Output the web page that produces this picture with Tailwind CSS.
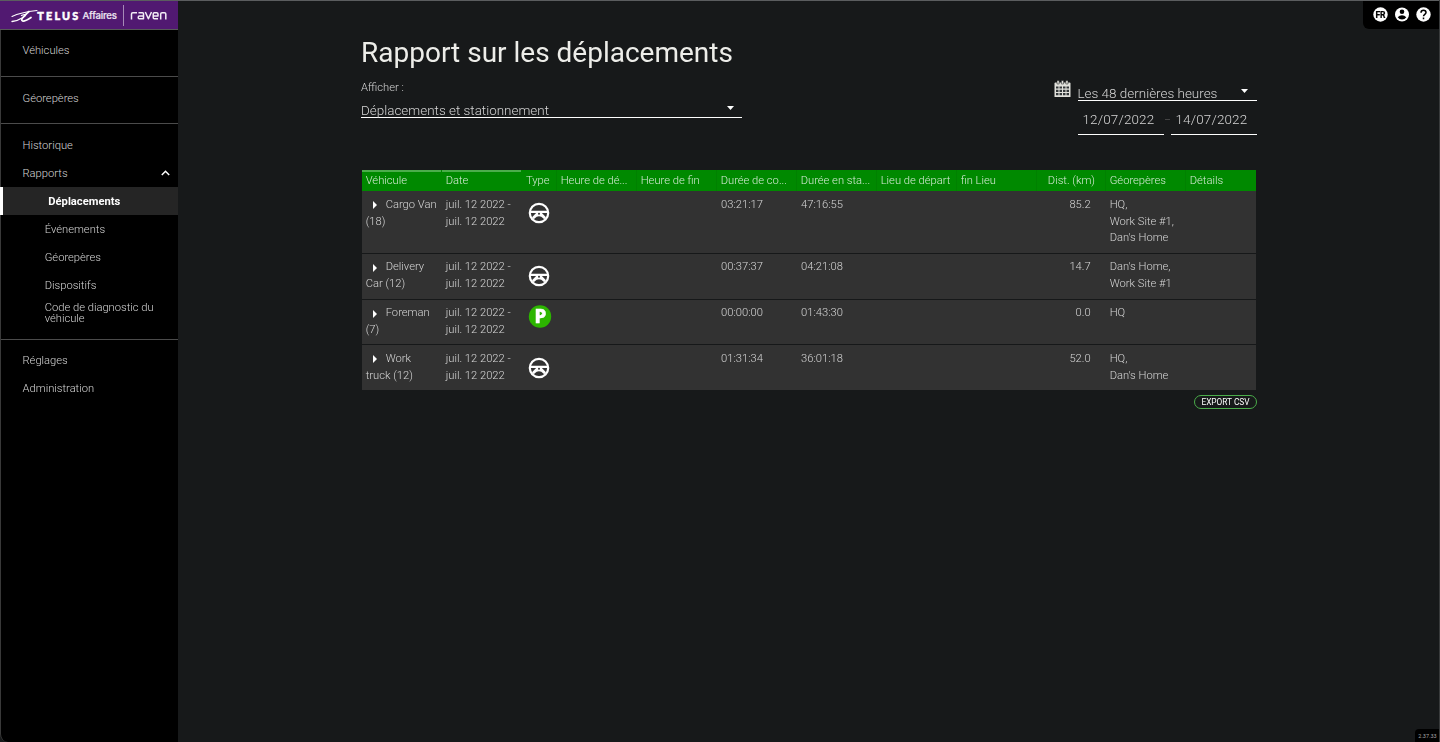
<!DOCTYPE html>
<html lang="fr">
<head>
<meta charset="utf-8">
<title>Rapport sur les déplacements</title>
<script src="https://cdn.jsdelivr.net/npm/@tailwindcss/browser@4"></script>
</head>
<body class="bg-[#17191a] font-['Roboto',sans-serif] font-light text-[#d6d6d6]">
<svg class="hidden">
  <symbol id="wheel" viewBox="0 0 22 22">
    <circle cx="11" cy="11" r="9.200" fill="none" stroke="#fff" stroke-width="2.200"/>
    <path d="M2 8.800H20V10.900H13.900L18 15.200L16.300 17.200L13.300 14.700Q11 13.600 8.700 14.700L5.700 17.200L4 15.200L8.100 10.900H2Z" fill="#fff"/>
    <path d="M7.500 17.300Q11 15.300 14.500 17.300Q11 19.500 7.500 17.300Z" fill="#333"/>
    <circle cx="11" cy="11.800" r="1" fill="#333"/>
  </symbol>
</svg>
<div class="relative flex h-[742px] w-[1440px] overflow-hidden opacity-[.999]">
  <aside class="h-full w-[178px] shrink-0 rounded-bl-lg border-l border-[#3a3a3a] bg-black text-[11.2px] leading-[14px]">
    <div class="-ml-px flex h-[30px] items-center border-b border-[#5a5a5a] bg-[#521a72]">
      <svg width="178" height="30" viewBox="0 0 178 30" fill="none">
        <g stroke="#fff" stroke-linecap="round">
          <path d="M12 16.500C19 13 28 11.500 37 10.500" stroke-width="1.100"/>
          <path d="M29 11.500C24 16 20 20 22.500 21C25 21.600 28 19.500 31 17.500" stroke-width="1.700"/>
          <path d="M21.500 15.500C26 13.500 27 15 23 17.500C19 20 15 21.300 12 21.500" stroke-width="1.300"/>
        </g>
        <text x="37.300" y="19.500" font-family="Lato" font-weight="900" font-size="10.800" textLength="41" fill="#fff" stroke="#fff" stroke-width=".5">TELUS</text>
        <text x="78.500" y="14" font-family="Inter" font-size="2.500" fill="#fff">™</text>
        <text x="82.500" y="19.300" font-family="Inter" font-weight="500" font-size="9.600" textLength="34.500" fill="#eee6f3" stroke="#eee6f3" stroke-width=".2">Affaires</text>
        <path d="M123.500 5V26" stroke="#a78bb8"/>
        <g stroke="#f3edf6" stroke-width="1.500" stroke-linejoin="round">
          <path d="M131.500 19.500V14Q131.500 12.700 132.800 12.700H137"/>
          <path d="M138.500 12.700H142.500Q143.500 12.700 143.500 13.800V18.700H139.200Q138.200 18.700 138.200 17.400Q138.200 16 139.500 16H143.500"/>
          <path d="M145.300 12L148.400 18.700L151.500 12"/>
          <path d="M153.200 16H158V14Q158 12.700 156.700 12.700H154.400Q153.200 12.700 153.200 14V17.400Q153.200 18.700 154.400 18.700H158"/>
          <path d="M160.700 19.500V14Q160.700 12.700 162 12.700H164.500Q165.800 12.700 165.800 14V19.500"/>
        </g>
      </svg>
    </div>
    <nav>
      <div class="h-[47px] border-b border-[#4c4c4c] pt-[14px] pl-[21.500px]">Véhicules</div>
      <div class="h-[47px] border-b border-[#4c4c4c] pt-[15px] pl-[21.500px]">Géorepères</div>
      <div class="h-[216px] border-b border-[#4c4c4c] pt-[7px]">
        <div class="flex h-[28px] items-center pt-[2px] pl-[21.500px]">Historique</div>
        <div class="flex h-[28px] items-center justify-between pt-[2px] pr-[8px] pl-[21.500px]">Rapports
          <svg class="mb-[2px]" width="9" height="6" viewBox="0 0 9 6" fill="none" stroke="#fff" stroke-width="1.500"><path d="M.8 5L4.500 1.300L8.200 5"/></svg>
        </div>
        <div class="-ml-px flex h-[28px] items-center border-l-[3px] border-white bg-[#262626] pt-[2px] pl-[45.300px] font-bold text-white">Déplacements</div>
        <div class="flex h-[28px] items-center pt-[2px] pl-[43.700px]">Événements</div>
        <div class="flex h-[28px] items-center pt-[2px] pl-[43.700px]">Géorepères</div>
        <div class="flex h-[28px] items-center pt-[2px] pl-[43.700px]">Dispositifs</div>
        <div class="flex h-[28px] items-center pl-[43.700px] leading-[11px]"><span>Code de diagnostic du<br>véhicule</span></div>
      </div>
      <div class="pt-[6px]">
        <div class="flex h-[28px] items-center pt-[2px] pl-[21.500px]">Réglages</div>
        <div class="flex h-[28px] items-center pt-[2px] pl-[21.500px]">Administration</div>
      </div>
    </nav>
  </aside>

  <main class="ml-[183px] w-[896px] pt-[34px]">
    <h1 class="h-[38px] text-[28px] leading-[38px] font-normal whitespace-nowrap text-[#eeeeea]">Rapport sur les déplacements</h1>
    <div class="flex h-[98px] justify-between">
      <div class="w-[381px] pt-[9px]">
        <div class="text-[11.200px] leading-[14px]">Afficher :</div>
        <div class="mt-[7px] flex h-[16px] items-end justify-between border-b border-white pr-[8px] text-[13.440px] leading-[14px]">
          <span class="-mb-px">Déplacements et stationnement</span>
          <svg class="mb-[7px]" width="7" height="4" viewBox="0 0 7 4" fill="#fff"><path d="M0 0H7L3.500 4Z"/></svg>
        </div>
      </div>
      <div class="flex gap-[7px]">
        <svg class="mt-[8px]" width="17" height="18" viewBox="0 0 17 18">
          <path d="M.5 3.500Q.5 2.500 1.500 2.500H15.500Q16.500 2.500 16.500 3.500V17H.5Z" fill="#e2e2dc"/>
          <path d="M3 .5H5.200V4H3ZM11.800 .5H14V4H11.800ZM7.400 .5H9.600V4H7.400Z" fill="#e2e2dc" stroke="#17191a" stroke-width=".5"/>
          <path d="M2 6.500H4.500V8.500H2ZM5.500 6.500H8V8.500H5.500ZM9 6.500H11.500V8.500H9ZM12.500 6.500H15V8.500H12.500ZM2 9.700H4.500V11.900H2ZM5.500 9.700H8V11.900H5.500ZM9 9.700H11.500V11.900H9ZM12.500 9.700H15V11.900H12.500ZM2 13.100H4.500V15.300H2ZM5.500 13.100H8V15.300H5.500ZM9 13.100H11.500V15.300H9ZM12.500 13.100H15V15.300H12.500Z" fill="#34383a"/>
        </svg>
        <div class="w-[179px] pt-[14px] text-[13.440px] leading-[14px]">
          <div class="flex h-[15px] items-end justify-between border-b border-white pr-[9px]">
            <span class="-mb-px -ml-[.5px]">Les 48 dernières heures</span>
            <svg class="mb-[7px]" width="7" height="4" viewBox="0 0 7 4" fill="#fff"><path d="M0 0H7L3.500 4Z"/></svg>
          </div>
          <div class="flex h-[34px] justify-between text-[13.440px] tracking-[.15px]">
            <div class="w-[86px] border-b border-white pt-[12px] pl-[4.500px]">12/07/2022</div>
            <div class="flex pt-[18px]"><div class="h-px w-[5px] bg-[#444]"></div></div>
            <div class="w-[86px] border-b border-white pt-[12px] pl-[4.500px]">14/07/2022</div>
          </div>
        </div>
      </div>
    </div>

    <div class="ml-px w-[894px] text-[11.200px] leading-[16.500px]">
      <div class="grid h-[21px] grid-cols-[80px_80px_35px_80px_80px_80px_80px_80px_80px_69px_80px_70px] bg-[#008a00] leading-[21px] whitespace-nowrap text-[#d5ead5]">
        <div class="mr-px border-t-2 border-[#4cae4c] pl-[3.700px] leading-[17px]">Véhicule</div>
        <div class="mr-px border-t-2 border-[#4cae4c] pl-[3.700px] leading-[17px]">Date</div>
        <div class="border-r border-[#008200] pl-[4px]">Type</div>
        <div class="border-r border-[#008200] pl-[3.700px]">Heure de dé...</div>
        <div class="border-r border-[#008200] pl-[3.700px]">Heure de fin</div>
        <div class="border-r border-[#008200] pl-[3.700px]">Durée de co...</div>
        <div class="border-r border-[#008200] pl-[3.700px]">Durée en sta...</div>
        <div class="border-r border-[#008200] pl-[3.700px]">Lieu de départ</div>
        <div class="border-r border-[#008200] pl-[3.700px]">fin Lieu</div>
        <div class="border-r border-[#008200] pr-[10px] text-right">Dist. (km)</div>
        <div class="border-r border-[#008200] pl-[3.700px]">Géorepères</div>
        <div class="pl-[3.700px]">Détails</div>
      </div>
      <div class="grid h-[63px] grid-cols-[80px_80px_195px_80px_240px_69px_150px] border-b border-[#17191a] bg-[#333] pt-[6px]">
        <div class="pl-[3.700px]"><svg class="mr-[8.500px] ml-[7.500px] inline-block align-[-1px]" width="4" height="8" viewBox="0 0 4 8" fill="#fff"><path d="M0 0L4 4L0 8Z"/></svg>Cargo Van<br>(18)</div>
        <div class="pl-[3.700px]">juil. 12 2022 -<br>juil. 12 2022</div>
        <div class="pt-[5px] pl-[6px]"><svg width="22" height="22"><use href="#wheel"/></svg></div>
        <div class="pl-[4px]">03:21:17</div>
        <div class="pl-[4px]">47:16:55</div>
        <div class="pr-[15.300px] text-right">85.2</div>
        <div class="pl-[3.700px]">HQ,<br>Work Site #1,<br>Dan's Home</div>
      </div>
      <div class="grid h-[46px] grid-cols-[80px_80px_195px_80px_240px_69px_150px] border-b border-[#17191a] bg-[#333] pt-[5px]">
        <div class="pl-[3.700px]"><svg class="mr-[8.500px] ml-[7.500px] inline-block align-[-2px]" width="4" height="8" viewBox="0 0 4 8" fill="#fff"><path d="M0 0L4 4L0 8Z"/></svg>Delivery<br>Car (12)</div>
        <div class="pl-[3.700px]">juil. 12 2022 -<br>juil. 12 2022</div>
        <div class="pt-[5.500px] pl-[6px]"><svg width="22" height="22"><use href="#wheel"/></svg></div>
        <div class="pl-[4px]">00:37:37</div>
        <div class="pl-[4px]">04:21:08</div>
        <div class="pr-[15.300px] text-right">14.7</div>
        <div class="pl-[3.700px]">Dan's Home,<br>Work Site #1</div>
      </div>
      <div class="grid h-[45px] grid-cols-[80px_80px_195px_80px_240px_69px_150px] border-b border-[#17191a] bg-[#333] pt-[5px]">
        <div class="pl-[3.700px]"><svg class="mr-[8.500px] ml-[7.500px] inline-block align-[-2px]" width="4" height="8" viewBox="0 0 4 8" fill="#fff"><path d="M0 0L4 4L0 8Z"/></svg>Foreman<br>(7)</div>
        <div class="pl-[3.700px]">juil. 12 2022 -<br>juil. 12 2022</div>
        <div class="pl-[6px]"><svg class="overflow-visible" width="24" height="24" viewBox="0 0 24 24"><circle cx="12" cy="11.500" r="11.200" fill="#2db600"/><text x="12.300" y="18.200" text-anchor="middle" font-family="Noto Sans" font-weight="800" font-size="18.800" fill="#fff" stroke="#fff" stroke-width=".5">P</text></svg></div>
        <div class="pl-[4px]">00:00:00</div>
        <div class="pl-[4px]">01:43:30</div>
        <div class="pr-[15.300px] text-right">0.0</div>
        <div class="pl-[3.700px]">HQ</div>
      </div>
      <div class="grid h-[45px] grid-cols-[80px_80px_195px_80px_240px_69px_150px] bg-[#333] pt-[6px]">
        <div class="pl-[3.700px]"><svg class="mr-[8.500px] ml-[7.500px] inline-block align-[-1px]" width="4" height="8" viewBox="0 0 4 8" fill="#fff"><path d="M0 0L4 4L0 8Z"/></svg>Work<br>truck (12)</div>
        <div class="pl-[3.700px]">juil. 12 2022 -<br>juil. 12 2022</div>
        <div class="pt-[5.500px] pl-[6px]"><svg width="22" height="22"><use href="#wheel"/></svg></div>
        <div class="pl-[4px]">01:31:34</div>
        <div class="pl-[4px]">36:01:18</div>
        <div class="pr-[15.300px] text-right">52.0</div>
        <div class="pl-[3.700px]">HQ,<br>Dan's Home</div>
      </div>
    </div>
    <div class="mt-[5px] flex justify-end">
      <button class="flex h-[14px] w-[63px] items-center justify-center rounded-full border border-[#4cae4c] pt-px text-[8.300px] leading-none font-normal whitespace-nowrap text-white">EXPORT CSV</button>
    </div>
  </main>

  <div class="absolute top-0 right-0 flex h-[29px] w-[77px] items-center gap-[7px] rounded-bl-md bg-black pl-[9.500px]">
    <svg width="15" height="15" viewBox="0 0 15 15"><circle cx="7.500" cy="7.500" r="7.200" fill="#fff"/><text x="7.500" y="10.600" text-anchor="middle" font-family="Roboto" font-weight="700" font-size="8.500" textLength="10" fill="#000" stroke="#000" stroke-width=".2">FR</text></svg>
    <svg width="14" height="15" viewBox="0 0 14 15"><circle cx="7" cy="7.500" r="7" fill="#fff"/><circle cx="7" cy="4.800" r="2.300"/><path d="M2.700 10.200Q4.500 8.300 7 8.300T11.300 10.200Q9.700 12.500 7 12.500T2.700 10.200Z"/></svg>
    <svg width="15" height="15" viewBox="0 0 15 15"><circle cx="7.500" cy="7.500" r="7.200" fill="#fff"/><path d="M5 5.700Q5 3.200 7.500 3.200T10 5.500C10 7.300 7.500 7.300 7.500 9.300M7.500 10.600V12.200" fill="none" stroke="#000" stroke-width="1.500"/></svg>
  </div>
  <div class="absolute right-0 bottom-0 flex h-[13px] w-[25px] items-center justify-center rounded-tl bg-black pt-px text-[5.500px] font-normal text-[#aaa]">2.37.33</div>
  <div class="absolute inset-x-0 top-0 h-px bg-[#5c5e60]"></div>
  <div class="absolute inset-y-0 right-0 w-px bg-[#3a3c3d]"></div>
</div>
</body>
</html>
